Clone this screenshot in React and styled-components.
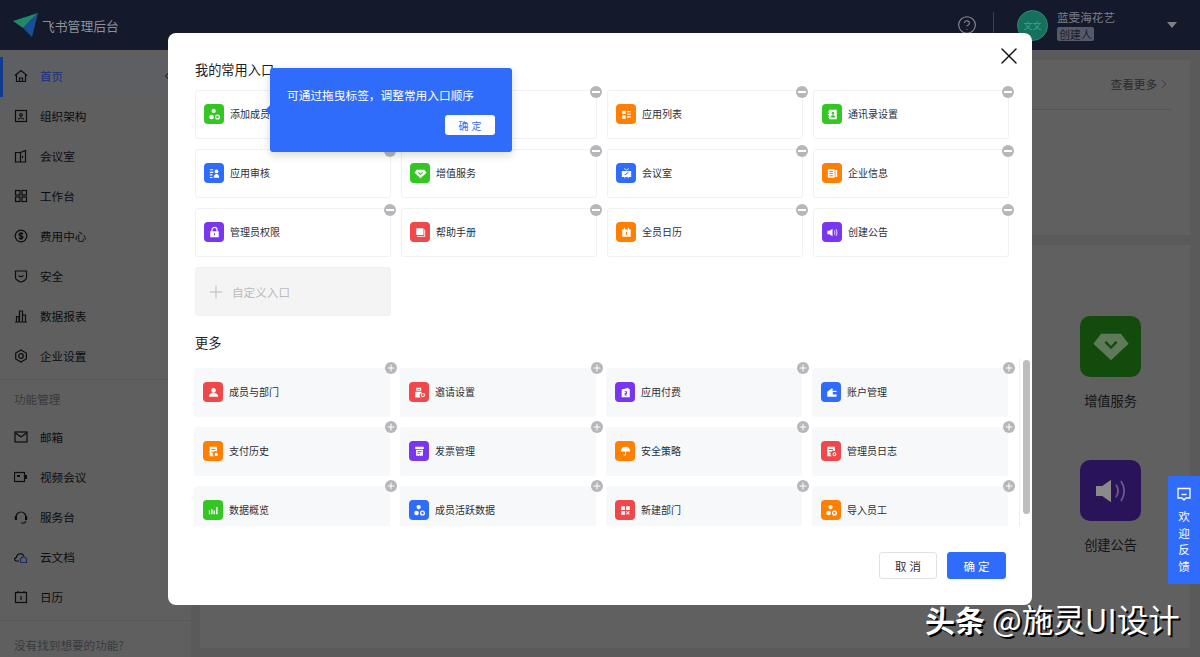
import React from 'react';
import styled, { createGlobalStyle } from 'styled-components';
import { ChevronLeft, ChevronRight, Plus, X, HelpCircle } from 'lucide-react';

const Global = createGlobalStyle`
  html, body { margin: 0; padding: 0; width: 1200px; height: 657px; overflow: hidden; background: #f0f1f3; }
  * { box-sizing: border-box; }
  body { font-family: "Noto Sans CJK SC", "Noto Sans", sans-serif; color: #1f2329; }
`;

const Page = styled.div`
  position: relative; width: 1200px; height: 657px; overflow: hidden;
  display: flex; flex-direction: column;
`;
const Header = styled.header`
  height: 50px; flex: none; background: #141a2b; display: flex; align-items: center; padding-left: 13px;
`;
const LogoText = styled.div`
  margin-left: 4px; font-size: 12.8px; color: #8c9097; white-space: nowrap;
`;
const HeaderRight = styled.div`
  margin-left: auto; display: flex; align-items: center; height: 100%; padding-right: 23px;
`;
const HelpWrap = styled.div`
  color: #8a8e96; display: flex; margin-right: 16px;
`;
const VLine = styled.div` width: 1px; height: 26px; background: #3a3f4c; margin-right: 23px; `;
const Avatar = styled.div`
  width: 31px; height: 31px; border-radius: 50%; background: #15705c; border: 1px solid #2e8a75;
  color: #3aa78f; font-size: 9px; display: flex; align-items: center; justify-content: center; margin-right: 9px;
`;
const UserBlock = styled.div` display: flex; flex-direction: column; width: 110px; gap: 3px; `;
const UserName = styled.div` font-size: 11.6px; line-height: 14px; color: #7b8088; `;
const UserTag = styled.div`
  font-size: 10.8px; line-height: 14px; color: #17202f; background: #555a68; border-radius: 2px; width: 37px; text-align: center;
`;
const Caret = styled.div`
  width: 0; height: 0; border-left: 5px solid transparent; border-right: 5px solid transparent; border-top: 6px solid #7d818a;
`;

const Body = styled.div` flex: 1; display: flex; min-height: 0; background: #5a5a5a; `;
const Sidebar = styled.aside`
  width: 191px; flex: none; background: #5f5f5f; position: relative; padding-top: 7px; display: flex; flex-direction: column;
`;
const NavItem = styled.div`
  height: 40px; flex: none; display: flex; align-items: center; padding: 0 0 2px 14px; gap: 12px; font-size: 11.6px; white-space: nowrap;
  color: ${p => (p.$active ? '#1a2f7f' : '#0c0d10')};
  background: ${p => (p.$active ? '#5d5f63' : 'transparent')};
  box-shadow: ${p => (p.$active ? 'inset 3px 0 0 #123a8f' : 'none')};
  svg { flex: none; color: #0c0d10; }
`;
const Collapse = styled.div`
  position: absolute; left: 161px; top: 20px; color: #0c0d10; display: flex;
`;
const SideDivider = styled.div` height: 1px; flex: none; background: #585858; margin-top: 2px; `;
const SideLabel = styled.div`
  font-size: 11.6px; color: #383a3d; padding-left: 14px; height: 38px; line-height: 38px; flex: none;
  white-space: nowrap;
`;
const SideHint = styled.div` font-size: 11.6px; color: #383a3d; padding: 16px 0 0 14px; white-space: nowrap; `;

const Main = styled.main` flex: 1; padding: 10px 10px 9px 9px; display: flex; flex-direction: column; gap: 10px; `;
const TopCard = styled.section`
  height: 175px; flex: none; background: #606060; padding: 0 19px 0 0; display: flex; flex-direction: column;
`;
const TopHead = styled.div`
  height: 50px; border-bottom: 1px solid #565656; display: flex; justify-content: flex-end; align-items: center;
  font-size: 11.6px; color: #2a2b2e; gap: 0; padding-bottom: 1px;
`;
const BottomCard = styled.section`
  flex: 1; background: #606060; display: grid; justify-content: end; padding: 71px 49px 0 0; grid-auto-rows: 144px;
`;
const BigTile = styled.div` width: 61px; display: flex; flex-direction: column; align-items: center; font-size: 13.2px; color: #131416; white-space: nowrap; `;
const BigIcon = styled.div`
  width: 61px; height: 61px; border-radius: 10px; background: ${p => p.$bg}; display: flex; align-items: center; justify-content: center; margin-bottom: 14px;
`;

const Scrim = styled.div`
  position: absolute; inset: 0; padding: 33px 0 0 168px; display: flex; align-items: flex-start;
`;
const Modal = styled.div`
  width: 864px; height: 572px; background: #fff; border-radius: 8px; position: relative; padding: 27px 0 0 27px; display: flex; flex-direction: column;
`;
const Close = styled.div` position: absolute; top: 9px; right: 9px; color: #111; display: flex; `;
const Title = styled.div` font-size: 13.2px; line-height: 20px; color: #1f2329; white-space: nowrap; `;
const Grid = styled.div`
  display: grid; grid-template-columns: repeat(4, 196px); grid-auto-rows: 49px; gap: 10px;
`;
const MineGrid = styled(Grid)` margin-top: 10px; `;
const MoreTitle = styled(Title)` margin-top: 17px; `;
const Scroller = styled.div`
  position: relative; height: 168px; margin: 5px 0 0 -1px; width: 836px; padding-top: 10px; overflow: hidden;
`;
const ScrollLine = styled.div` position: absolute; left: 825px; top: 0; bottom: 0; width: 1px; background: #f0f0f0; `;
const Thumb = styled.div` position: absolute; left: 829px; top: 2px; width: 7px; height: 154px; border-radius: 4px; background: #bdbdbd; `;
const Card = styled.div`
  position: relative; display: flex; align-items: center; padding: 0 0 1px 8px; gap: 6px; font-size: 10px; color: #2b2f36; white-space: nowrap;
  background: #fff; border: 1px solid #f0f1f2; border-radius: 3px;
`;
const MoreCard = styled(Card)` background: #f7f8fa; border-color: #f7f8fa; `;
const CardLabel = styled.span` margin-bottom: 2px; `;
const Tile = styled.div`
  width: 20px; height: 20px; border-radius: 4px; background: ${p => p.$bg}; display: flex; align-items: center; justify-content: center; flex: none;
`;
const Badge = styled.div`
  position: absolute; top: ${p => p.$top}px; right: ${p => p.$right}px; width: 12px; height: 12px; border-radius: 50%; background: #b6b7ba;
  display: flex; align-items: center; justify-content: center;
`;
const MinusBar = styled.div` width: 8px; height: 2px; background: #fff; `;
const Custom = styled.div`
  display: flex; align-items: center; background: #f4f4f4; border: 1px solid #f0f1f2; border-radius: 3px; padding-left: 10px; gap: 6px;
  color: #b9bbbf; font-size: 11.6px; white-space: nowrap;
`;
const Footer = styled.div`
  margin-top: 26px; padding-right: 26px; display: flex; justify-content: flex-end; gap: 10px;
`;
const Btn = styled.button`
  height: 27px; width: ${p => (p.$primary ? 59 : 58)}px; font: inherit; font-size: 11.5px; letter-spacing: 3px; padding: 0 0 0 3px; border-radius: 3px;
  color: ${p => (p.$primary ? '#fff' : '#2b2f36')}; background: ${p => (p.$primary ? '#2f6cfb' : '#fff')};
  border: 1px solid ${p => (p.$primary ? '#2f6cfb' : '#dfe1e5')};
`;
const Tip = styled.div`
  position: absolute; left: 102px; top: 35px; width: 242px; height: 84px; background: #2f6cfb; border-radius: 3px; color: #fff;
  box-shadow: 0 3px 10px rgba(0,0,0,.16); padding: 17px 17px 0; font-size: 11.7px; display: flex; flex-direction: column;
  &::before { content: ''; position: absolute; left: -3px; top: 38px; width: 8px; height: 8px; background: #2f6cfb; transform: rotate(45deg); }
`;
const TipText = styled.div` line-height: 20px; white-space: nowrap; `;
const TipBtn = styled.button`
  align-self: flex-end; margin-top: 10px; width: 50px; height: 20px; border: none; border-radius: 3px; background: #fff; color: #2f6cfb; font: inherit;
  font-size: 10px; letter-spacing: 3px; padding: 0 0 0 3px;
`;
const Feedback = styled.div`
  position: absolute; left: 1168px; top: 476px; width: 32px; height: 108px; background: #2f6cfb; color: #fff;
  display: flex; flex-direction: column; align-items: center; padding-top: 10px; font-size: 11.5px; line-height: 16.5px; border-radius: 2px 0 0 2px;
`;
const FeedText = styled.div` width: 12px; text-align: center; margin-top: 6px; `;
const Watermark = styled.div`
  position: absolute; left: 925px; top: 598px; font-size: 31.5px; line-height: 40px; color: #fff; white-space: nowrap;
  text-shadow: 2px 2px 0 #000;
  font-family: "Noto Sans CJK SC", sans-serif;
`;
const Strong = styled.span` font-size: 30px; font-weight: 700; margin-right: 7px; `;

/* white glyphs inside the coloured tiles */
const G = {
  member: <><circle cx="9" cy="6" r="2.500"/><circle cx="6.500" cy="13" r="2.700"/><circle cx="13.500" cy="13" r="2.200" fill="none" stroke="#fff" strokeWidth="1.600"/></>,
  person: <><circle cx="10" cy="7.500" r="2.700"/><path d="M4.500 15c0-3 2-4.500 5.500-4.500s5.500 1.500 5.500 4.500z"/></>,
  audit: <><path d="M4.500 5h4v1.300h-4zM4.500 8h4v1.300h-4zM4.500 11h3v1.300h-3zM4.500 14h3v1.300h-3z"/><circle cx="12.300" cy="7.500" r="2.200"/><path d="M9 15c0-3 1.300-4.500 3.300-4.500s3.200 1.500 3.200 4.500z"/></>,
  lock: <><path d="M7 9V7a3 3 0 016 0v2" fill="none" stroke="#fff" strokeWidth="1.300"/><path fillRule="evenodd" d="M5 8.500h10v7H5zM9.400 11v2.200h1.200V11z"/></>,
  gem: <path fillRule="evenodd" d="M5.500 5.500h9L17 9l-7 6.500L3 9zM7 9l3 2.800L13 9l-1 -.8-2 1.800-2-1.800z"/>,
  book: <><path d="M5 5h8.500v8H5z"/><path d="M14.500 6.500h1V15H6v-1h8.500z"/></>,
  list: <><path d="M5 5.500h4v4H5zM5 11h4v4H5zM10.500 6h4.500v1.400h-4.500zM10.500 9h4.500v1.400h-4.500zM10.500 12h4.500v1.400h-4.500z"/></>,
  room: <path fillRule="evenodd" d="M4.500 7h11v7h-3v1.500h-1V14h-3v1.500h-1V14h-3zM7 4.500l3 2 3-2-.6-.7L10 5.500 7.600 3.800zM7.500 11l1 1 4-3-.6-.7-3.400 2.500-.5-.5z"/>,
  calendar: <path fillRule="evenodd" d="M5 6.500h2V4.500h1.300v2h3.400v-2H13v2h2V15H5zM9.400 9.500V13h1.200V9.500z"/>,
  book2: <path fillRule="evenodd" d="M4.500 5h8v10h-8zM6.300 7v1.200h4.400V7zM6.300 9.500v1.200h4.400V9.500zM6.300 12v1.200h4.400V12zM13.500 6h2v8h-2z"/>,
  contacts: <path fillRule="evenodd" d="M6 4.500h9v11H6zM4.500 6.500H6v1H4.500zM4.500 9.500H6v1H4.500zM4.500 12.500H6v1H4.500zM10.500 7a1.600 1.600 0 100 3.200 1.600 1.600 0 000-3.200zM7.800 13.500h5.400c0-2-1.200-2.700-2.700-2.700s-2.700.7-2.700 2.700z"/>,
  speaker: <><path d="M4 8h2.500L10 5.500v9L6.500 12H4z"/><path d="M12 7.500c1 1.500 1 3.500 0 5M14 6c1.600 2.500 1.600 5.500 0 8" fill="none" stroke="#fff" strokeWidth="1"/></>,
  speakerBig: <><path d="M4 8h2.500L10 5.500v9L6.500 12H4z" fill="#8a8a8a"/><path d="M12 7.500c1 1.500 1 3.500 0 5M14 6c1.600 2.500 1.600 5.500 0 8" fill="none" stroke="#6c5a88" strokeWidth=".7"/></>,
  invite: <><path fillRule="evenodd" d="M5 9h7.500v1.500a3 3 0 00-1 5.500H5zM6.200 4.500h5.800v3.500H6.200zM7.600 5.800v1h3v-1z"/><circle cx="14" cy="13" r="1.900" fill="none" stroke="#fff" strokeWidth="1.200"/></>,
  pay: <path fillRule="evenodd" d="M5.500 6.500l8-2V6h1.500v9.500H5.500zM9 8.500v1h1.600v.8H9V13.500h2.800v-1H10.200v-.8h1.600V8.500z"/>,
  wallet: <path fillRule="evenodd" d="M5 9l5.500-4 1.500 1.500L10 8h6v1.500h-4.500v2.800H16V15H5z"/>,
  receiptDot: <><path fillRule="evenodd" d="M5.500 4.500H14V10a3 3 0 00-3.500 5.500h-5zM7.300 7v1.200h5V7zM7.300 10v1.200h2.500V10z"/><circle cx="13.300" cy="13.500" r="1.900"/></>,
  invoice: <path fillRule="evenodd" d="M5 4.500h10V7H5zM6 8h8v7.500l-1.300-1-1.300 1-1.400-1-1.400 1-1.300-1-1.300 1zM7.500 9.800V11h5V9.800zM7.500 12v1h3v-1z"/>,
  umbrella: <path fillRule="evenodd" d="M10 4.500c3.300 0 5.500 2.200 5.500 5.500h-5v3.500c0 1.800-2.800 1.800-3 0h1c.1.600 1 .6 1 0V10h-5c0-3.300 2.200-5.500 5.500-5.500z"/>,
  log: <><path fillRule="evenodd" d="M5 4.500h9v5a3 3 0 00-3.500 6H5zM6.800 7v1.200h5V7zM6.800 10v1.200h2.500V10z"/><circle cx="13.500" cy="13.300" r="1.700" fill="none" stroke="#fff" strokeWidth="1.200"/></>,
  bars: <path d="M4.500 10h1.600v4.500H4.500zM7.300 8.500h1.600v6H7.300zM10.100 10h1.600v4.500h-1.600zM13 6h1.800v8.500H13z"/>,
  grid: <><path d="M5 5h4.300v4.300H5zM10.700 5H15v4.300h-4.300zM5 10.700h4.300V15H5z"/><path d="M11 11l3.500 3.500M14.500 11L11 14.500" stroke="#fff" strokeWidth="1.300"/></>,
};

const Glyph = ({ name, size = 17 }) => (
  <svg width={size} height={size} viewBox="0 0 20 20" fill="#fff">{G[name]}</svg>
);

const GREEN = '#34c724', BLUE = '#2f6cfb', ORANGE = '#ff8000', PURPLE = '#7a35ee', RED = '#f0474a';

const mine = [
  ['添加成员', GREEN, 'member'], ['', BLUE, 'member'], ['应用列表', ORANGE, 'list'], ['通讯录设置', GREEN, 'contacts'],
  ['应用审核', BLUE, 'audit'], ['增值服务', GREEN, 'gem'], ['会议室', BLUE, 'room'], ['企业信息', ORANGE, 'book2'],
  ['管理员权限', PURPLE, 'lock'], ['帮助手册', RED, 'book'], ['全员日历', ORANGE, 'calendar'], ['创建公告', PURPLE, 'speaker'],
];
const more = [
  ['成员与部门', RED, 'person'], ['邀请设置', RED, 'invite'], ['应用付费', PURPLE, 'pay'], ['账户管理', BLUE, 'wallet'],
  ['支付历史', ORANGE, 'receiptDot'], ['发票管理', PURPLE, 'invoice'], ['安全策略', ORANGE, 'umbrella'], ['管理员日志', RED, 'log'],
  ['数据概览', GREEN, 'bars'], ['成员活跃数据', BLUE, 'member'], ['新建部门', RED, 'grid'], ['导入员工', ORANGE, 'member'],
];

const N = { fill: 'none', stroke: 'currentColor', strokeWidth: 1.200 };
const nav = [
  ['首页', <path d="M1 6.500L7 1.500l6 5M2.500 5.500V12.500h9V5.500M5.500 12.500V9h3v3.500" {...N} />, true],
  ['组织架构', <><rect x="1.500" y="1.500" width="11" height="11" {...N} /><circle cx="7" cy="5.800" r="1.300" {...N} /><path d="M4.500 10.500c0-2 5-2 5 0" {...N} /></>],
  ['会议室', <><path d="M1.500 3.500h5v9.500h-5zM6.500 3.500L11.500 1.500v11.500h-5" {...N} /><path d="M8.500 7v2" {...N} /></>],
  ['工作台', <><rect x="1.500" y="1.500" width="4.500" height="4.500" {...N} /><rect x="8" y="1.500" width="4.500" height="4.500" {...N} /><rect x="1.500" y="8" width="4.500" height="4.500" {...N} /><rect x="8" y="8" width="4.500" height="4.500" {...N} /></>],
  ['费用中心', <><circle cx="7" cy="7" r="5.800" {...N} /><path d="M9 5c-.6-1.300-4-1.300-4 .5 0 1.800 4 .9 4 2.800 0 1.700-3.500 1.700-4 .2M7 3v8" {...N} /></>],
  ['安全', <><path d="M1.500 2h11v6.500c0 2-3 4-5.500 4.500-2.500-.5-5.500-2.500-5.500-4.500z" {...N} /><path d="M4.500 6.500c.8 1.500 4.200 1.500 5 0" {...N} /></>],
  ['数据报表', <path d="M1 13h12M2.500 13V7.500h2.500V13M5.500 13V2h3v11M8.500 13V6h3v7" {...N} />],
  ['企业设置', <><path d="M7 1l5.300 3v6L7 13l-5.300-3V4z" {...N} /><circle cx="7" cy="7" r="2.300" {...N} /></>],
];
const nav2 = [
  ['邮箱', <><rect x="1" y="2" width="12" height="10" {...N} /><path d="M1.500 3l5.500 4 5.500-4" {...N} /></>],
  ['视频会议', <><rect x="0.500" y="2.500" width="10" height="9" {...N} /><path d="M3 6h3M12 5v4" {...N} strokeWidth="2" /></>],
  ['服务台', <><path d="M2 7a5 5 0 0110 0M7 13h3.500l1.500-2" {...N} /><rect x="0.800" y="6" width="2.200" height="4" fill="currentColor" /><rect x="11" y="6" width="2.200" height="4" fill="currentColor" /></>],
  ['云文档', <><path d="M5 11H2.500C0 11 0 7.500 2.500 7.300 3 3 8.500 2.500 9.700 6" {...N} /><path d="M6.500 12.500V8.500L9.500 6.500l3 2v4z" fill="none" stroke="#1a2c66" strokeWidth="1.200" /></>],
  ['日历', <><rect x="1.500" y="2.500" width="11" height="10" {...N} /><path d="M4 1v2M10 1v2M7 6v4" {...N} /></>],
];
const Ico = ({ children }) => <svg width="14" height="14" viewBox="0 0 14 14">{children}</svg>;

const Plane = () => (
  <svg width="25" height="25" viewBox="0 0 25 25">
    <path d="M0 8L25 0 10 15z" fill="#1f8a6a" />
    <path d="M25 0L19 24 10 15z" fill="#1a4f95" />
  </svg>
);

const TileCard = ({ as: C, label, bg, glyph, children }) => (
  <C>
    <Tile $bg={bg}><Glyph name={glyph} /></Tile>
    <CardLabel>{label}</CardLabel>
    {children}
  </C>
);

export default function App() {
  return (
    <Page>
      <Global />
      <Header>
        <Plane />
        <LogoText>飞书管理后台</LogoText>
        <HeaderRight>
          <HelpWrap><HelpCircle size={20} strokeWidth={1.300} /></HelpWrap>
          <VLine />
          <Avatar>文文</Avatar>
          <UserBlock>
            <UserName>蓝雯海花艺</UserName>
            <UserTag>创建人</UserTag>
          </UserBlock>
          <Caret />
        </HeaderRight>
      </Header>
      <Body>
        <Sidebar>
          <Collapse><ChevronLeft size={12} strokeWidth={2} /></Collapse>
          {nav.map(([t, i, a]) => <NavItem key={t} $active={a}><Ico>{i}</Ico>{t}</NavItem>)}
          <SideDivider />
          <SideLabel>功能管理</SideLabel>
          {nav2.map(([t, i]) => <NavItem key={t}><Ico>{i}</Ico>{t}</NavItem>)}
          <SideDivider />
          <SideHint>没有找到想要的功能?</SideHint>
        </Sidebar>
        <Main>
          <TopCard>
            <TopHead>查看更多<ChevronRight size={14} strokeWidth={1.200} /></TopHead>
          </TopCard>
          <BottomCard>
            <BigTile><BigIcon $bg="#134b0d"><svg width="44" height="44" viewBox="0 0 20 20"><path fillRule="evenodd" d="M5.500 4h9L18 8.500 10 16 2 8.500zM7 8l3 3 3-3-.9-.7L10 9.500 7.900 7.300z" fill="#5f7a58" /></svg></BigIcon>增值服务</BigTile>
            <BigTile><BigIcon $bg="#2a1459"><Glyph name="speakerBig" size={50} /></BigIcon>创建公告</BigTile>
          </BottomCard>
        </Main>
      </Body>
      <Scrim>
        <Modal>
          <Close><X size={28} strokeWidth={1.200} /></Close>
          <Title>我的常用入口</Title>
          <MineGrid>
            {mine.map(([t, b, g], i) => (
              <TileCard key={i} as={Card} label={t} bg={b} glyph={g}>
                <Badge $top={-5} $right={-6}><MinusBar /></Badge>
              </TileCard>
            ))}
            <Custom><Plus size={20} strokeWidth={1.200} />自定义入口</Custom>
          </MineGrid>
          <MoreTitle>更多</MoreTitle>
          <Scroller>
            <Grid>
              {more.map(([t, b, g], i) => (
                <TileCard key={i} as={MoreCard} label={t} bg={b} glyph={g}>
                  <Badge $top={-7} $right={-8}><Plus size={10} color="#fff" strokeWidth={2.500} /></Badge>
                </TileCard>
              ))}
            </Grid>
            <ScrollLine />
            <Thumb />
          </Scroller>
          <Footer>
            <Btn>取消</Btn>
            <Btn $primary>确定</Btn>
          </Footer>
          <Tip>
            <TipText>可通过拖曳标签，调整常用入口顺序</TipText>
            <TipBtn>确定</TipBtn>
          </Tip>
        </Modal>
      </Scrim>
      <Feedback>
        <svg width="16" height="16" viewBox="0 0 16 16" fill="none" stroke="#fff" strokeWidth="1.300"><path d="M2 2.500h12v9.500h-4L8 14l-2-2H2z" /><path d="M5.500 8.500h5" /></svg>
        <FeedText>欢迎反馈</FeedText>
      </Feedback>
      <Watermark><Strong>头条</Strong>@施灵UI设计</Watermark>
    </Page>
  );
}
